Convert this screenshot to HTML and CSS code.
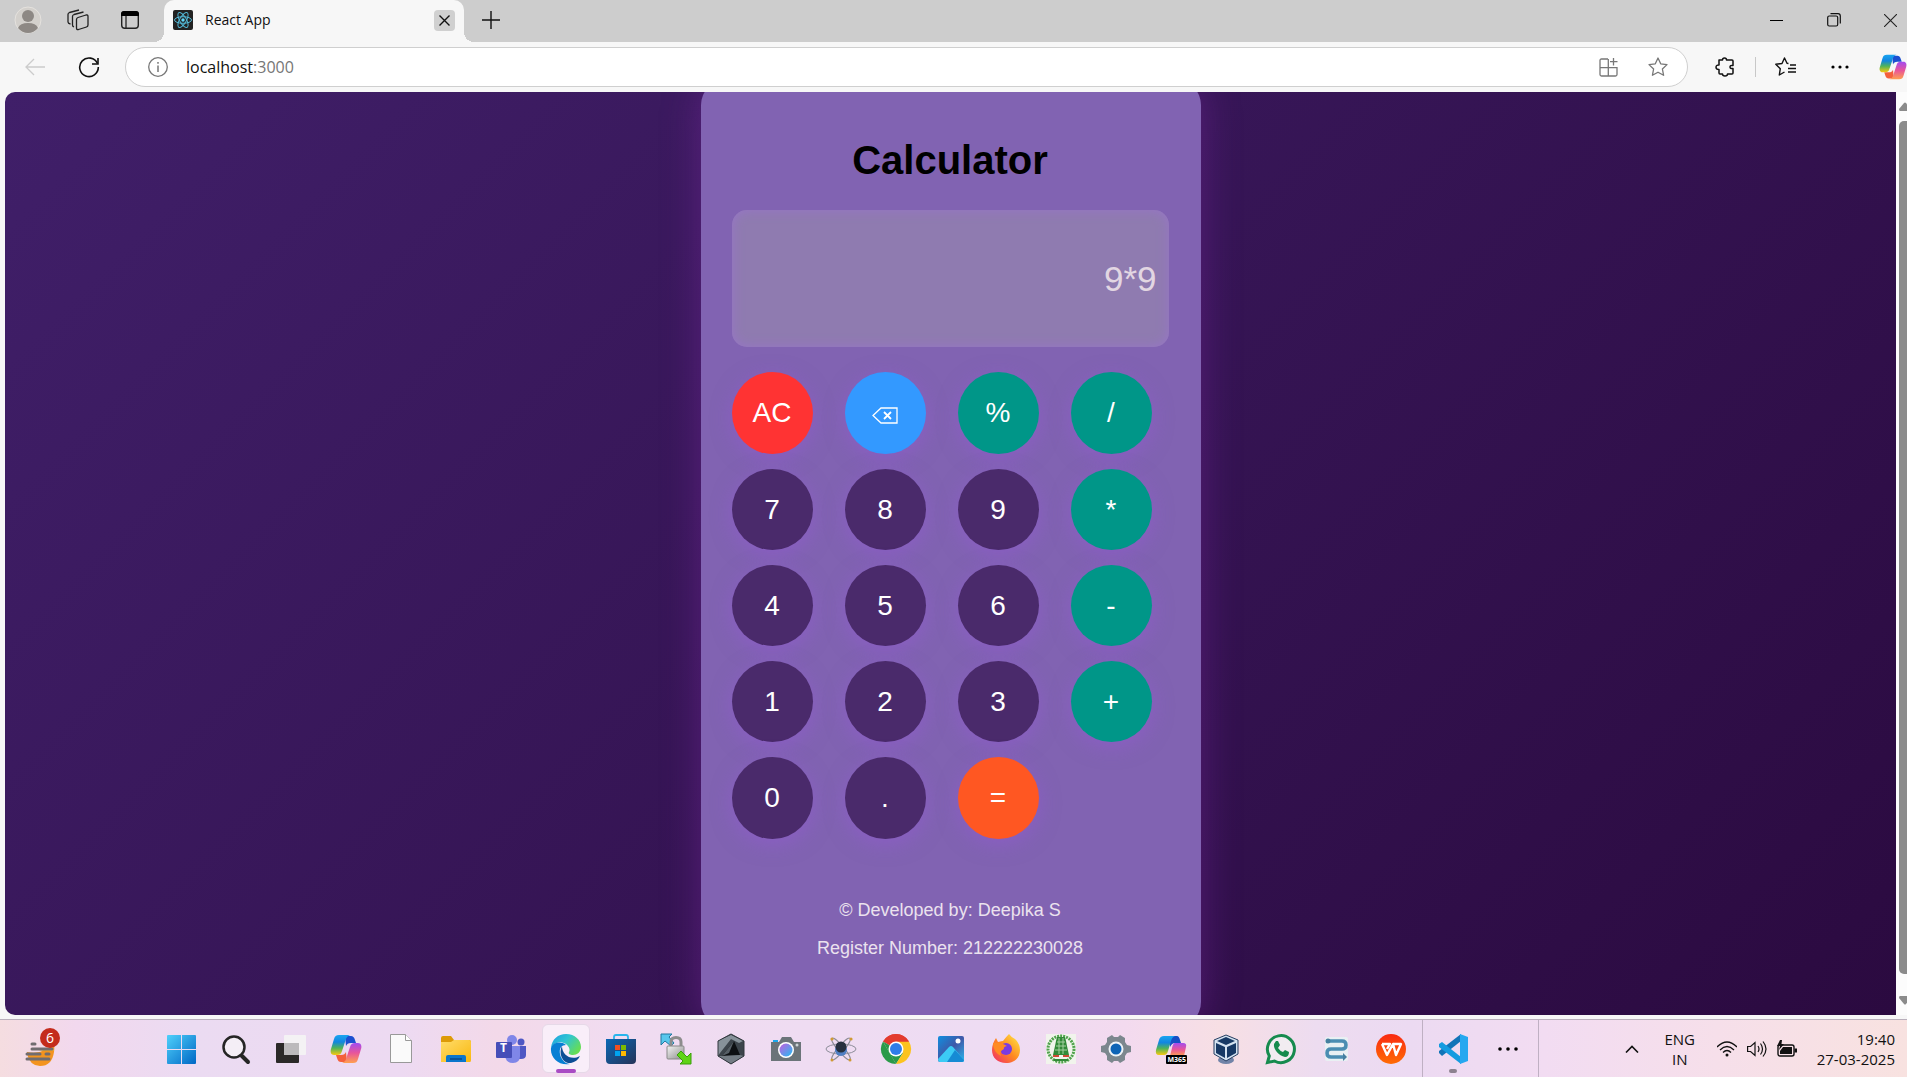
FILE: index.html
```html
<!DOCTYPE html>
<html lang="en">
<head>
<meta charset="utf-8">
<title>React App</title>
<link rel="stylesheet" href="styles.css">
</head>
<body>
<svg class="defs" aria-hidden="true">
  <defs>
    <linearGradient id="cpA" x1="0" y1="0" x2="0" y2="1"><stop offset="0" stop-color="#1aa5f0"/><stop offset=".35" stop-color="#1286e0"/><stop offset=".65" stop-color="#4fb35a"/><stop offset="1" stop-color="#f7c90f"/></linearGradient>
    <linearGradient id="cpB" x1="0" y1="0" x2="0" y2="1"><stop offset="0" stop-color="#a24bf0"/><stop offset=".5" stop-color="#e8559a"/><stop offset="1" stop-color="#ffa04f"/></linearGradient>
    <linearGradient id="win" x1="0" y1="0" x2="1" y2="1"><stop offset="0" stop-color="#4fd0fb"/><stop offset="1" stop-color="#0067c5"/></linearGradient>
    <linearGradient id="folder" x1="0" y1="0" x2="1" y2="1"><stop offset="0" stop-color="#ffdc6a"/><stop offset="1" stop-color="#f9b80f"/></linearGradient>
    <linearGradient id="edgeTop" x1="0" y1="0" x2="1" y2=".6"><stop offset="0" stop-color="#1b9de2"/><stop offset=".5" stop-color="#30c5d2"/><stop offset="1" stop-color="#66dd55"/></linearGradient>
    <linearGradient id="store" x1="0" y1="0" x2="1" y2="1"><stop offset="0" stop-color="#0b68b5"/><stop offset="1" stop-color="#253358"/></linearGradient>
    <linearGradient id="lens" x1="0" y1="0" x2="1" y2="1"><stop offset="0" stop-color="#c65ee0"/><stop offset="1" stop-color="#20bdf2"/></linearGradient>
    <linearGradient id="steel" x1="0" y1="0" x2="1" y2="1"><stop offset="0" stop-color="#f4f4f4"/><stop offset="1" stop-color="#8b8b8b"/></linearGradient>
    <linearGradient id="fox" x1="1" y1="0" x2="0" y2="1"><stop offset="0" stop-color="#fff04a"/><stop offset=".5" stop-color="#ff8a1f"/><stop offset="1" stop-color="#f0246e"/></linearGradient>
    <linearGradient id="photo" x1="0" y1="0" x2="1" y2="1"><stop offset="0" stop-color="#0f8fe0"/><stop offset=".5" stop-color="#3f58a8"/><stop offset="1" stop-color="#2ab8ee"/></linearGradient>
    <linearGradient id="wps" x1="0" y1="0" x2="0" y2="1"><stop offset="0" stop-color="#f92a12"/><stop offset="1" stop-color="#ff6c04"/></linearGradient>
    <symbol id="copilot" viewBox="0 0 32 32">
      <path d="M15 3h6c2 0 3 1 4 4l1 3h-5c-3 0-4 1-5 3z" fill="#1b4fd0"/>
      <path d="M17 29h-6c-2 0-3-1-4-4l-1-3h5c3 0 4-1 5-3z" fill="#f4603c"/>
      <path d="M9 2h11c-3 1-4 3-5 7l-3 9c-1 3-2 4-5 4H4c-3 0-4-3-3-6L4 6c1-3 2-4 5-4z" fill="url(#cpA)"/>
      <path d="M23 30H12c3-1 4-3 5-7l3-9c1-3 2-4 5-4h3c3 0 4 3 3 6l-3 10c-1 3-2 4-5 4z" fill="url(#cpB)"/>
    </symbol>
  </defs>
</svg>

<header class="titlebar">
  <div class="title-tools">
    <button class="plain" aria-label="Profile"><svg width="28" height="28" viewBox="0 0 28 28"><circle cx="14" cy="14" r="13" fill="#d3d0cc" stroke="#e5e2de"/><circle cx="14" cy="10" r="6" fill="#8d8884"/><path d="M4 22q2-5 10-5t10 5q-4 5-10 5T4 22z" fill="#8d8884"/></svg></button>
    <button class="plain" aria-label="Workspaces"><svg width="22" height="22" viewBox="0 0 22 22" fill="none" stroke="#222" stroke-width="1.3" stroke-linejoin="round"><path d="M11 8.500 19 6q2-.5 2 1.500V16q0 1.500-1.500 2l-8 2.500q-2 .5-2-1.500v-8.500q0-1.500 1.500-2z"/><path d="M7 18q-1.500-.5-1.500-2V7.500Q5.500 6 7 5.500L16.500 3"/><path d="M3.500 15Q1 14.500 1 13V5.500Q1 4 2.500 3.500L12 1"/></svg></button>
    <button class="plain" aria-label="Tab actions"><svg width="20" height="20" viewBox="0 0 20 20"><rect x="1.700" y="1.700" width="16.600" height="16.600" rx="3" fill="none" stroke="#222" stroke-width="1.400"/><path d="M1 6V4q0-3 3-3h12q3 0 3 3v2z" fill="#000"/><path d="M6 6v12" stroke="#222" stroke-width="1.300"/></svg></button>
  </div>
  <div class="tab">
    <svg width="20" height="20" viewBox="0 0 20 20"><rect width="20" height="20" rx="2" fill="#222"/><g fill="none" stroke="#53b8d6" stroke-width="1"><ellipse cx="10" cy="10" rx="8.500" ry="3.300"/><ellipse cx="10" cy="10" rx="8.500" ry="3.300" transform="rotate(60 10 10)"/><ellipse cx="10" cy="10" rx="8.500" ry="3.300" transform="rotate(120 10 10)"/></g><circle cx="10" cy="10" r="1.700" fill="#61dafb"/></svg>
    <span class="tab-title">React App</span>
    <button class="plain tab-close" aria-label="Close tab"><svg width="11" height="11" viewBox="0 0 11 11" stroke="#111" stroke-width="1.400"><path d="M.5.5l10 10M10.500.5l-10 10"/></svg></button>
  </div>
  <button class="plain new-tab" aria-label="New tab"><svg width="18" height="18" viewBox="0 0 18 18" stroke="#111" stroke-width="1.400"><path d="M9 0v18M0 9h18"/></svg></button>
  <div class="window-buttons">
    <button class="plain" aria-label="Minimize"><svg width="13" height="13" viewBox="0 0 13 13"><path d="M0 6.500h13" stroke="#000"/></svg></button>
    <button class="plain" aria-label="Restore"><svg width="14" height="14" viewBox="0 0 14 14" fill="none" stroke="#111" stroke-width="1.200"><rect x=".7" y="3" width="10" height="10" rx="1.500"/><path d="M3.500.7H11q2.300 0 2.300 2.300v7.500"/></svg></button>
    <button class="plain" aria-label="Close"><svg width="13" height="13" viewBox="0 0 13 13" stroke="#222" stroke-width="1.100"><path d="M0 0l13 13M13 0L0 13"/></svg></button>
  </div>
</header>

<div class="toolbar">
  <button class="plain nav-button" aria-label="Back"><svg width="20" height="18" viewBox="0 0 20 18" fill="none" stroke="#ccc" stroke-width="1.300"><path d="M20 9H1M9 1L1 9l8 8"/></svg></button>
  <button class="plain nav-button" aria-label="Refresh"><svg width="22" height="22" viewBox="0 0 22 22" fill="none" stroke="#111" stroke-width="1.600"><path d="M19.500 7.500A9.300 9.300 0 1 0 20.300 11"/><path d="M20 2v6h-6"/></svg></button>
  <div class="address">
    <svg width="20" height="20" viewBox="0 0 20 20" fill="none" stroke="#777" stroke-width="1.300"><circle cx="10" cy="10" r="9.300"/><path d="M10 8.500V15M10 5v1.800" stroke-width="1.500"/></svg>
    <div class="url">localhost<span>:3000</span></div>
    <button class="plain" aria-label="Apps"><svg width="19" height="19" viewBox="0 0 19 19" fill="none" stroke="#777" stroke-width="1.300"><path d="M9 1H2.500Q1 1 1 2.500v14Q1 18 2.500 18h14q1.500 0 1.500-1.500V9.700H1M9.300 1v17M14.500 0v7.500M11 3.700h7.500"/></svg></button>
    <button class="plain" aria-label="Add to favorites"><svg width="20" height="20" viewBox="0 0 20 20" fill="none" stroke="#777" stroke-width="1.300" stroke-linejoin="round"><path d="M10 1l2.700 5.800 6.300.8-4.600 4.400 1.200 6.300L10 15.200l-5.600 3.100L5.600 12 1 7.600l6.300-.8z"/></svg></button>
  </div>
  <div class="toolbar-actions">
    <button class="plain" aria-label="Extensions"><svg width="20" height="20" viewBox="0 0 20 20" fill="none" stroke="#111" stroke-width="1.500" stroke-linejoin="round"><path d="M4 3h3.500q0-2 2-2t2 2H17q1 0 1 1v4.500q-3-.5-3 1.500t3 1.500V16q0 1-1 1h-4.500q0 2-2.500 2t-2.500-2H5q-1 0-1-1v-3.500q-3 0-3-2.300T4 8z"/></svg></button>
    <span class="divider"></span>
    <button class="plain" aria-label="Favorites"><svg width="21" height="20" viewBox="0 0 21 20" fill="none" stroke="#111" stroke-width="1.400" stroke-linejoin="round"><path d="M13.500 6.500L12 6.300 9.500 1 7 6.500.8 7.300 5.300 11.700 4.300 18l5.200-3M15 8h6M13 11.500h8M13 15h8"/></svg></button>
    <button class="plain" aria-label="Settings and more"><svg width="18" height="4" viewBox="0 0 18 4"><circle cx="2" cy="2" r="1.600"/><circle cx="9" cy="2" r="1.600"/><circle cx="16" cy="2" r="1.600"/></svg></button>
    <button class="plain" aria-label="Copilot"><svg width="28" height="28"><use href="#copilot"/></svg></button>
  </div>
</div>

<div class="browser-view">
  <main class="page">
    <section class="calculator">
      <h1>Calculator</h1>
      <input class="display" type="text" value="9*9" aria-label="Calculation" readonly>
      <div class="keys">
        <button class="key clear">AC</button>
        <button class="key erase" aria-label="Backspace"><svg width="26" height="17" viewBox="0 0 26 17" fill="none" stroke="#fff" stroke-width="1.300"><path d="M9 1h16v15H9L1 8.500z"/><path d="M12 5l7 7M19 5l-7 7" stroke-width="1.800"/></svg></button>
        <button class="key operator">%</button>
        <button class="key operator">/</button>
        <button class="key">7</button>
        <button class="key">8</button>
        <button class="key">9</button>
        <button class="key operator">*</button>
        <button class="key">4</button>
        <button class="key">5</button>
        <button class="key">6</button>
        <button class="key operator">-</button>
        <button class="key">1</button>
        <button class="key">2</button>
        <button class="key">3</button>
        <button class="key operator">+</button>
        <button class="key">0</button>
        <button class="key">.</button>
        <button class="key equals">=</button>
      </div>
      <footer class="credit">
        <p>© Developed by: Deepika S</p>
        <p>Register Number: 212222230028</p>
      </footer>
    </section>
  </main>
  <div class="scrollbar" aria-hidden="true">
    <svg width="12" height="9" viewBox="0 0 12 9"><path d="M5 1q1-1 2 0l5 6q0 2-1 2H1Q0 9 0 7z" fill="#8b8b8b"/></svg>
    <span class="thumb"></span>
    <svg width="12" height="9" viewBox="0 0 12 9"><path d="M5 8q1 1 2 0l5-6q0-2-1-2H1Q0 0 0 2z" fill="#8b8b8b"/></svg>
  </div>
</div>

<footer class="taskbar">
  <button class="plain weather" aria-label="Weather">
    <svg width="36" height="36" viewBox="0 0 36 36"><path d="M3 21q10 2 18-2 6-2 8-6 2 2 1 8-2 14-14 14Q6 35 3 23z" fill="#f3941f"/><path d="M14 20q10-1 15-7l1 7z" fill="#f7b128"/><path d="M8 13h3M8 18h20M3 23h13M22 23h3M3 28h22" stroke="#706c70" stroke-width="3" stroke-linecap="round"/></svg>
    <span class="badge">6</span>
  </button>
  <nav class="apps">
    <button class="plain" aria-label="Start"><svg width="32" height="32" viewBox="0 0 32 32"><path d="M2 3q0-1 1-1h13v14H2zM17 2h13q1 0 1 1v13H17zM2 17h14v14H3q-1 0-1-1zM17 17h14v13q0 1-1 1H17z" fill="url(#win)"/></svg></button>
    <button class="plain" aria-label="Search"><svg width="32" height="32" viewBox="0 0 32 32" fill="none" stroke="#252525"><circle cx="14" cy="14" r="10.500" fill="#f4eef6" stroke-width="2.500"/><path d="M22 23l6 6" stroke-width="4" stroke-linecap="round"/></svg></button>
    <button class="plain" aria-label="Task view"><svg width="32" height="32" viewBox="0 0 32 32"><rect x="1" y="10" width="23" height="20" rx="1" fill="#2b2928"/><rect x="9" y="2" width="22" height="20" rx="1" fill="#f4f2f4"/><path d="M9 10h15v12H9z" fill="#bcbabc"/></svg></button>
    <button class="plain" aria-label="Copilot"><svg width="32" height="32"><use href="#copilot"/></svg></button>
    <button class="plain" aria-label="Document"><svg width="32" height="32" viewBox="0 0 32 32"><path d="M5.500 1.500h15l6 6v22h-21z" fill="#fafafa" stroke="#999"/><path d="M20.500 1.500v6h6" fill="#fff" stroke="#999"/></svg></button>
    <button class="plain" aria-label="File Explorer"><svg width="32" height="32" viewBox="0 0 32 32"><path d="M1 5q0-2 2-2h8l3 4h15q2 0 2 2v5H1z" fill="#dd9b08"/><path d="M1 9h10l3-2h15q2 0 2 2v18q0 2-1 2H1z" fill="url(#folder)"/><path d="M6 29v-5q0-2 2-2h16q2 0 2 2v5z" fill="#0a76cc"/><path d="M10 26h12" stroke="#074a8c" stroke-width="1.500"/></svg></button>
    <button class="plain" aria-label="Teams"><svg width="32" height="32" viewBox="0 0 32 32"><circle cx="17" cy="7" r="5" fill="#7f86e8"/><circle cx="26" cy="9" r="3.500" fill="#4e57c4"/><path d="M22 13h9v9q0 4-5 4h-4z" fill="#4e57c4"/><path d="M9 13h16v10q0 7-7 7t-8-7z" fill="#7f86e8"/><rect x="1" y="9" width="16" height="16" rx="1" fill="#464eb8"/></svg><span class="icon-letter teams-letter">T</span></button>
    <button class="plain active" aria-label="Edge"><svg width="32" height="32" viewBox="0 0 32 32"><path d="M1 15C2 6 8 1 16 1c9 0 15 6 15 13 0 5-4 8-8 8-3 0-5-1-4-3 1-1 1-5-3-8C10 7 3 10 1 15z" fill="url(#edgeTop)"/><path d="M1 15c2-6 10-7 15-3-5 0-7 4-6 9 1 6 6 10 10 10C9 33 0 25 1 15z" fill="#087fd4"/><path d="M12 13c-4 8 1 18 9 17 4-1 7-3 9-7-9 5-18-1-18-10z" fill="#0d4e96"/></svg></button>
    <button class="plain" aria-label="Microsoft Store"><svg width="32" height="32" viewBox="0 0 32 32"><path d="M9 8V4q0-2 2-2h10q2 0 2 2v4" fill="none" stroke="#29b5ec" stroke-width="1.800"/><path d="M1 6h30v21q0 4-4 4H5q-4 0-4-4z" fill="url(#store)"/><path d="M10 12h5v5h-5z" fill="#f25022"/><path d="M16 12h5v5h-5z" fill="#7fba00"/><path d="M10 18h5v5h-5z" fill="#00a4ef"/><path d="M16 18h5v5h-5z" fill="#ffb900"/></svg></button>
    <button class="plain" aria-label="File transfer"><svg width="32" height="32" viewBox="0 0 32 32"><path d="M1 1h11L9 4l5 6-3 3-6-5-4 4z" fill="#58c7ec" stroke="#2079a0"/><path d="M11 14V9q0-4.500 5-4.500T21 9v5" fill="none" stroke="#8d8d8d" stroke-width="3"/><rect x="7" y="13" width="17" height="13" rx="1" fill="url(#steel)" stroke="#888"/><path d="M31 31H20l3-3-6-6 4-4 6 6 4-4z" fill="#5fd416" stroke="#3a9e0a"/></svg></button>
    <button class="plain" aria-label="Hexagon app"><svg width="32" height="32" viewBox="0 0 32 32"><path d="M16 1l13 7v15l-13 8-13-8V8z" fill="#3c444b"/><path d="M16 2l12 6-4 2-8-4L5 20 3 23V8z" fill="#87929a"/><path d="M19 8l6 14-18 1z" fill="#0d1013"/><path d="M19 8L7 23l7-3z" fill="#565f66"/><path d="M7 23l18-1 4 1-13 8-13-8z" fill="#737c84"/><path d="M16 1l13 7v15l-13 8-13-8V8z" fill="none" stroke="#30373d"/></svg></button>
    <button class="plain" aria-label="Camera"><svg width="32" height="32" viewBox="0 0 32 32"><path d="M3 7h5v4H3z" fill="#1ca9ec"/><path d="M1 9h8l3-5h9l3 5h7v19H1z" fill="#6b7479"/><circle cx="16" cy="17" r="8" fill="#fff"/><circle cx="16" cy="17" r="6.500" fill="url(#lens)"/><circle cx="27" cy="12" r="1.500" fill="#ccd3d6"/></svg></button>
    <button class="plain" aria-label="Atom"><svg width="32" height="32" viewBox="0 0 32 32" fill="none" stroke="#8d8d99"><ellipse cx="16" cy="16" rx="15" ry="5"/><ellipse cx="16" cy="16" rx="14" ry="3" transform="rotate(50 16 16)"/><ellipse cx="16" cy="16" rx="14" ry="3" transform="rotate(-50 16 16)"/><circle cx="16" cy="17" r="6" fill="#4f7fc4" stroke="none"/><circle cx="16" cy="14" r="5.500" fill="#26303f" stroke="none"/><g fill="#d09a34" stroke="none"><circle cx="7" cy="6" r="1.600"/><circle cx="26" cy="6" r="1.600"/><circle cx="7" cy="27" r="1.500"/><circle cx="25" cy="27" r="1.500"/></g></svg></button>
    <button class="plain" aria-label="Chrome"><svg width="32" height="32" viewBox="0 0 32 32"><path d="M16 16L3 8.500A15 15 0 0 1 29 8.500z" fill="#e33b2e"/><path d="M3 8.500L16 31A15 15 0 0 1 3 8.500z" fill="#2a9a49"/><path d="M3 8.500L9.500 20 16 31l7-11z" fill="#2a9a49"/><path d="M16 8.500h13A15 15 0 0 1 16 31l7-11z" fill="#fcc31e"/><path d="M3 8.500Q8 1 16 1t13 7.500H16z" fill="#e33b2e"/><circle cx="16" cy="16" r="7.500" fill="#fff"/><circle cx="16" cy="16" r="6" fill="#2f7de8"/></svg></button>
    <button class="plain" aria-label="Photos"><svg width="32" height="32" viewBox="0 0 32 32"><rect x="3" y="3" width="26" height="26" rx="2" fill="url(#photo)"/><path d="M3 26l11-12q2-2 4 0l11 13q0 2-2 2H5q-2 0-2-3z" fill="#3ccbf5"/><path d="M12 29l8-12 9 10q0 2-2 2z" fill="#168bd4"/><circle cx="23" cy="8" r="2.500" fill="#fff"/></svg></button>
    <button class="plain" aria-label="Firefox"><svg width="32" height="32" viewBox="0 0 32 32"><path d="M19 1q3 4 6 5 5 5 5 11c0 8-6 13-14 13S2 25 2 17q0-6 4-12l2 4q4-1 5-1 3-4 6-7z" fill="url(#fox)"/><circle cx="16" cy="16" r="6" fill="#7a3be0"/><path d="M3 10q6-2 14 3-4 1-3 3-5 2-3 7-8-4-8-13z" fill="#ff8b22"/></svg></button>
    <button class="plain" aria-label="State emblem"><svg width="32" height="32" viewBox="0 0 32 32"><path d="M1 1h30v30H1z" fill="#f1f4ec"/><circle cx="16" cy="16" r="13" fill="none" stroke="#50a34c" stroke-width="3" stroke-dasharray="2 1"/><path d="M12 4h8l1 4 1 5 2 9H8l2-9 1-5z" fill="#328a38"/><path d="M12 9h8M11 13h10M10 17h12M14 5v16M18 5v16" stroke="#a5d0a0"/><path d="M8 22h6v2H8zM18 22h6v2h-6z" fill="#d04a35"/><path d="M9 27h14" stroke="#328a38" stroke-width="2"/></svg></button>
    <button class="plain" aria-label="Settings"><svg width="32" height="32" viewBox="0 0 32 32"><path d="M12 2l2 2h4l2-2 5 3v4l2 3 4 1v6l-4 1-2 3v4l-5 3-2-2h-4l-2 2-5-3v-4l-2-3-4-1v-6l4-1 2-3V5z" fill="#7c878e"/><circle cx="16" cy="16" r="7.500" fill="#eef3f7"/><circle cx="16" cy="16" r="5.500" fill="#0d64b6"/></svg></button>
    <button class="plain" aria-label="Microsoft 365 Copilot"><svg width="32" height="32" viewBox="0 0 32 32"><path d="M15 3h7q2 0 3 4l1 3h-6q-3 0-5 4z" fill="#164fc5"/><path d="M9 3h11q-3 1-4 5l-3 10q-1 4-4 4H4q-4 0-3-5L4 7q1-4 5-4z" fill="url(#cpA)"/><path d="M20 10h8q4 0 3 4l-2 9H15l2-8q1-5 3-5z" fill="url(#cpB)"/></svg><span class="m365">M365</span></button>
    <button class="plain" aria-label="VirtualBox"><svg width="32" height="32" viewBox="0 0 32 32"><ellipse cx="16" cy="27" rx="8" ry="4" fill="#7184a8"/><path d="M16 2l12 5v14l-12 7-12-7V7z" fill="#d4e2f0" stroke="#243d60"/><path d="M16 4l9 4-9 4-9-4zM6 10l9 4v11l-9-5zM26 10l-9 4v11l9-5z" fill="#173965"/></svg></button>
    <button class="plain" aria-label="WhatsApp"><svg width="32" height="32" viewBox="0 0 32 32"><path d="M2.500 29.500L4.300 23A13.500 13.500 0 1 1 9.500 28z" fill="#f1ecf1" stroke="#168b4e" stroke-width="3"/><path d="M11 8l2 0 2 4-2 3q2 3 5 4l2-2 4 2q0 5-4 5C14 23 8 16 9 11z" fill="#168b4e"/></svg></button>
    <button class="plain" aria-label="Route app"><svg width="32" height="32" viewBox="0 0 32 32"><rect x="5" y="4" width="23" height="24" rx="2" fill="#e9f0f3"/><path d="M7 8h15q4 0 4 4t-4 4H11q-4 0-4 4t4 4h14" fill="none" stroke="#4b8db2" stroke-width="3.500"/><circle cx="8" cy="8" r="2.500" fill="#457f9f"/><path d="M23 20l4 4-4 4z" fill="#457f9f"/></svg></button>
    <button class="plain" aria-label="WPS Office"><svg width="32" height="32" viewBox="0 0 32 32"><circle cx="16" cy="16" r="15" fill="url(#wps)"/><path d="M7 11h8l-3 5M7 11l5 11 6-11 3 11 5-11h-8" fill="none" stroke="#fff" stroke-width="2.400" stroke-linejoin="round"/></svg></button>
  </nav>
  <nav class="apps running">
    <button class="plain open" aria-label="Visual Studio Code"><svg width="32" height="32" viewBox="0 0 32 32"><path d="M2 20l3 3L24 8V1L2 18z" fill="#1174b8"/><path d="M2 11l3-2 19 15v7L2 14z" fill="#159be0"/><path d="M23 1l8 3v24l-8 3z" fill="#25a8f0"/></svg></button>
    <button class="plain" aria-label="More apps"><svg width="20" height="4" viewBox="0 0 20 4"><circle cx="2" cy="2" r="1.800"/><circle cx="10" cy="2" r="1.800"/><circle cx="18" cy="2" r="1.800"/></svg></button>
  </nav>
  <div class="tray">
    <button class="plain" aria-label="Hidden icons"><svg width="14" height="8" viewBox="0 0 14 8" fill="none" stroke="#111" stroke-width="1.600"><path d="M1 7.500l6-6 6 6"/></svg></button>
    <div class="language">ENG<br>IN</div>
    <div class="status">
      <svg width="20" height="16" viewBox="0 0 20 16" fill="none" stroke="#111" stroke-width="1.300"><path d="M0 6Q10-4 20 6M3 9q7-7 14 0M6 11.500q4-4 8 0"/><circle cx="10" cy="14" r="1.500" fill="#111" stroke="none"/></svg>
      <svg width="20" height="18" viewBox="0 0 20 18" fill="none" stroke="#111" stroke-width="1.200"><path d="M.6 6.500h3L8 2.500v13l-4.400-4H.6zM11 6q2 3 0 6M13.500 3.500q4 5.500 0 11M16 1.500q6 7.500 0 15"/></svg>
      <svg width="20" height="18" viewBox="0 0 20 18"><rect x="1" y="5" width="16" height="11" rx="2" fill="none" stroke="#111" stroke-width="1.400"/><path d="M6 7h9v7H3v-3zM17.500 8.500H20v4h-2.500z" fill="#111"/><path d="M3 0L0 6h3l-1 4 5-6H4.500L5 0z" fill="#111"/></svg>
    </div>
    <time class="clock" datetime="2025-03-27T19:40">19:40<br>27-03-2025</time>
  </div>
</footer>
</body>
</html>
```
FILE: styles.css
```css
* { box-sizing: border-box; }

body {
  margin: 0;
  min-height: 100vh;
  display: flex;
  flex-direction: column;
  overflow: hidden;
  background: #f7f7f7;
  color: #111;
  font-family: "Open Sans", "Noto Sans", sans-serif;
}

svg { display: block; flex: none; }
.defs { position: absolute; width: 0; height: 0; }

.plain {
  display: flex;
  align-items: center;
  justify-content: center;
  padding: 0;
  border: 0;
  background: none;
  font: inherit;
  color: inherit;
}

/* Tab strip */
.titlebar {
  display: flex;
  align-items: center;
  height: 42px;
  padding-bottom: 2px;
  background: #cdcdcd;
}
.title-tools {
  display: flex;
  align-items: center;
  gap: 25px;
  width: 164px;
  padding-left: 14px;
}
.title-tools .plain:last-child { padding-left: 6px; }
.tab {
  position: relative;
  display: flex;
  align-items: center;
  gap: 12px;
  width: 300px;
  height: 42px;
  margin-bottom: -2px;
  padding: 0 9px 2px;
  border-radius: 10px 10px 0 0;
  background: #f7f7f7;
}
.tab::before,
.tab::after {
  content: "";
  position: absolute;
  bottom: 0;
  width: 10px;
  height: 10px;
}
.tab::before { right: 100%; background: radial-gradient(circle at 0 0, #cdcdcd 10px, #f7f7f7 10px); }
.tab::after { left: 100%; background: radial-gradient(circle at 100% 0, #cdcdcd 10px, #f7f7f7 10px); }
.tab-title { flex: 1; font-size: 14px; line-height: 20px; }
.tab-close { width: 21px; height: 21px; border-radius: 4px; background: #d0d0d0; }
.new-tab { margin-left: 18px; }
.window-buttons { display: flex; margin-left: auto; margin-right: -12px; }
.window-buttons .plain { width: 57px; height: 40px; }

/* Address row */
.toolbar {
  display: flex;
  align-items: center;
  height: 50px;
  padding-left: 8px;
}
.nav-button { width: 54px; height: 40px; }
.address {
  flex: 1;
  display: flex;
  align-items: center;
  gap: 30px;
  height: 40px;
  margin-left: 9px;
  padding: 0 19px 0 22px;
  border: 1px solid #cfcfcf;
  border-radius: 20px;
  background: #fff;
}
.url { flex: 1; margin-left: -12px; font-size: 16px; line-height: 24px; }
.url span { color: #767676; }
.toolbar-actions {
  display: flex;
  align-items: center;
  width: 219px;
  padding-left: 27px;
}
.toolbar-actions .plain:first-child { margin-right: 20px; }
.divider { width: 1px; height: 20px; background: #c8c8c8; }
.toolbar-actions .divider + .plain { margin: 0 35px 0 19px; }
.toolbar-actions .plain:last-child { margin-left: 30px; }

/* Page area */
.browser-view {
  flex: 1;
  display: flex;
  margin: 0 0 4px 5px;
}
.page {
  flex: 1;
  display: flex;
  justify-content: center;
  overflow: hidden;
  border-radius: 10px 0 0 10px;
  background: linear-gradient(135deg, #401f69, #2b0a40);
  font-family: "Liberation Sans", Arial, sans-serif;
}
.scrollbar {
  display: flex;
  flex-direction: column;
  align-items: flex-start;
  gap: 10px;
  width: 11px;
  padding: 10px 0 10px 3px;
  overflow: hidden;
  background: #fcfcfc;
}
.thumb { flex: 1; width: 12px; margin-bottom: 12px; border-radius: 5px; background: #8b8b8b; }

/* Calculator */
.calculator {
  width: 500px;
  margin: -12px 0;
  padding: 56px 32px 0 31px;
  border-radius: 25px;
  background: #8163b2;
  box-shadow: 0 0 38px rgba(135, 45, 175, .42);
}
.calculator h1 {
  margin: 0 0 26px;
  font-size: 40px;
  line-height: 48px;
  text-align: center;
  color: #000;
}
.display {
  display: block;
  width: 100%;
  height: 137px;
  margin: 0 0 25px;
  padding: 0 12px;
  border: 0;
  border-radius: 15px;
  background: #8f7bb0;
  box-shadow: inset 0 0 12px #9774c8;
  color: #e2d6e2;
  font: 35px "Liberation Sans", Arial, sans-serif;
  text-align: right;
}
.keys {
  display: grid;
  grid-template-columns: repeat(4, 81px);
  grid-template-rows: 82px repeat(3, 81px) 82px;
  gap: 15px 32px;
}
.key {
  display: flex;
  align-items: center;
  justify-content: center;
  padding: 0;
  border: 0;
  border-radius: 50%;
  background: #4a2a6b;
  box-shadow: 0 5px 20px rgba(150, 90, 215, .5);
  color: #fff;
  font: 28px "Liberation Sans", Arial, sans-serif;
}
.clear { background: #f33; }
.erase { padding-top: 4px; background: #39f; }
.operator { background: #009688; }
.equals { background: #ff5722; }
.credit { padding-top: 59px; font-size: 18px; line-height: 24px; text-align: center; color: #ebe2ee; }
.credit p { margin: 0 0 14px; }

/* Taskbar */
.taskbar {
  display: flex;
  height: 58px;
  border-top: 1px solid #b9afbb;
  background: linear-gradient(90deg, #f5dde0, #f2d8ee 4%, #ebdbf2 10%, #eddaf2 21%, #f3d9e9 26%, #f0dcf1 33%, #eedcf3 52%, #f3daef 59%, #f7dfe4 64%, #eddcf0 69%, #ecdaf2 74%, #f2dcf2 81%, #f6dfea 90%, #f8e2e0);
}
.weather { position: relative; width: 153px; justify-content: flex-start; padding-left: 24px; }
.badge {
  position: absolute;
  top: 8px;
  left: 40px;
  width: 20px;
  height: 20px;
  border-radius: 50%;
  background: #c42b1c;
  color: #fff;
  font-size: 14px;
  line-height: 20px;
}
.apps { display: flex; align-items: center; padding-right: 4px; }
.apps .plain { position: relative; width: 55px; height: 57px; }
.apps .active::before {
  content: "";
  position: absolute;
  inset: 4px 3px 4px 4px;
  border: 1px solid #e6d9e8;
  border-radius: 6px;
  background: #f9eef9;
}
.apps .active svg { position: relative; }
.apps .active::after,
.apps .open::after {
  content: "";
  position: absolute;
  bottom: 4px;
  width: 20px;
  height: 4px;
  border-radius: 2px;
  background: #a94bc4;
}
.apps .open::after { width: 8px; background: #8d8290; }
.running { padding: 0 3px 0 2px; border: solid #bfb0c3; border-width: 0 1px; }
.icon-letter, .m365 { position: absolute; color: #fff; font-weight: 700; }
.teams-letter { top: 20px; left: 17px; font-size: 12px; line-height: 16px; }
.m365 { right: 11px; bottom: 13px; padding: 0 1px; border-radius: 1px; background: #000; font-size: 7px; line-height: 9px; }
.tray {
  display: flex;
  align-items: center;
  margin-left: auto;
  padding-right: 12px;
  font-size: 15px;
  line-height: 20px;
}
.language { width: 64px; margin-left: 9px; text-align: center; }
.status { display: flex; align-items: center; gap: 10px; margin: 0 20px 0 5px; }
.clock { text-align: right; }
```
